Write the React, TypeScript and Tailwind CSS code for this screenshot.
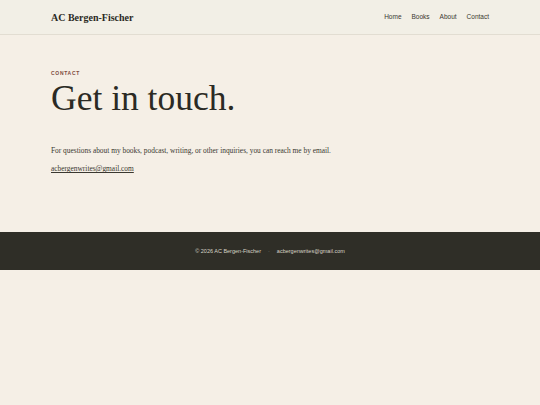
import React from "react";

export default function App() {
  return (
    <div className="min-h-[405px] bg-[#f5efe6] text-[#2b2a24]">
      <header className="bg-[#f2efe6] border-b border-[#e2ddd2]">
        <div className="max-w-[438px] mx-auto h-[34px] flex items-center justify-between">
          <div className="text-[10px] font-bold text-[#2b2a24] font-['Liberation_Serif',serif]">AC Bergen-Fischer</div>
          <nav className="flex gap-[10px] text-[6.5px] text-[#3a3830] font-['Liberation_Sans',Arial,sans-serif]">
            <span>Home</span>
            <span>Books</span>
            <span>About</span>
            <span>Contact</span>
          </nav>
        </div>
      </header>
      <main className="max-w-[438px] mx-auto pt-[35px] pb-[58px]">
        <div className="text-[5px] font-bold tracking-[0.14em] text-[#7d4a3e] font-['Liberation_Sans',Arial,sans-serif]">CONTACT</div>
        <h1 className="text-[35.5px] leading-none mt-[3px] text-[#2b2a24] font-['Liberation_Serif',serif]">Get in touch.</h1>
        <p className="mt-[29px] text-[7.4px] text-[#3a3830] font-['Liberation_Serif',serif]">
          For questions about my books, podcast, writing, or other inquiries, you can reach me by email.
        </p>
        <p className="mt-[7px] text-[7.4px] text-[#3a3830] underline font-['Liberation_Serif',serif]">acbergenwrites@gmail.com</p>
      </main>
      <footer className="bg-[#2f2e27] h-[38px] flex items-center justify-center gap-[7px] text-[5.5px] text-[#d8d4c8] font-['Liberation_Sans',Arial,sans-serif]">
        <span>© 2026 AC Bergen-Fischer</span>
        <span className="text-[#8a877c]">·</span>
        <span>acbergenwrites@gmail.com</span>
      </footer>
    </div>
  );
}
